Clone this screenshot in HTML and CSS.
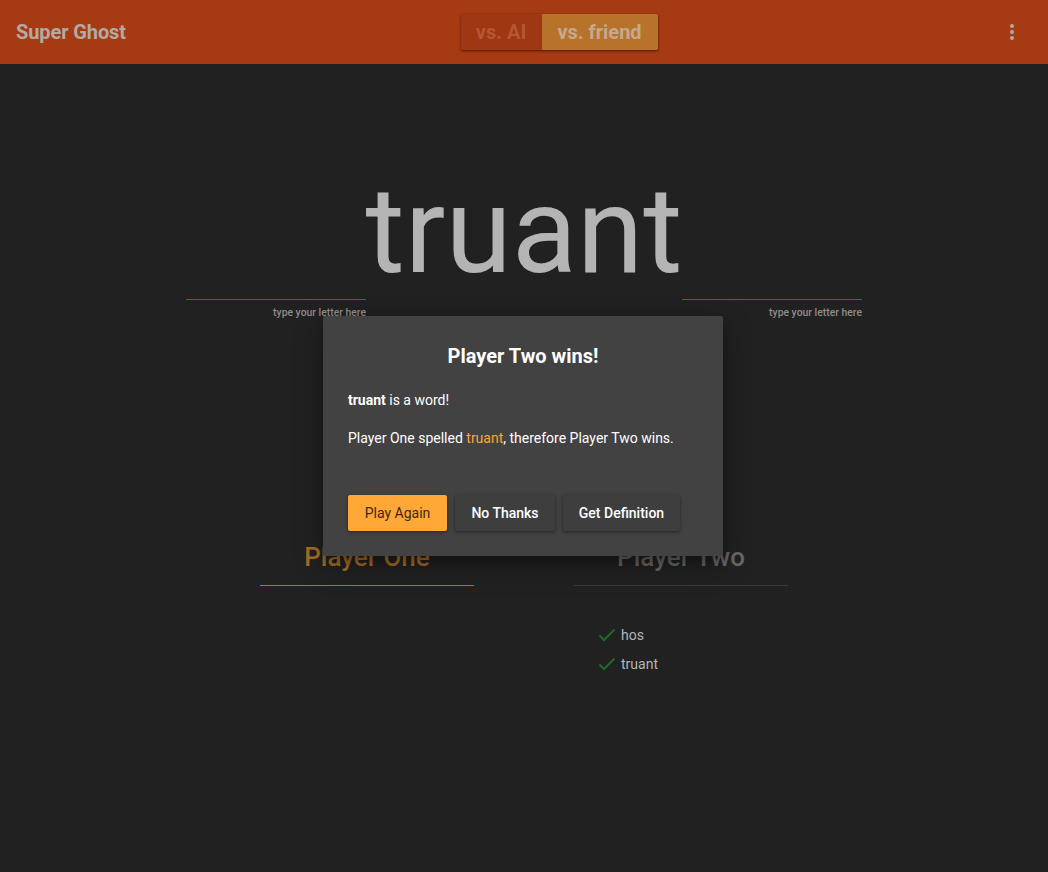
FILE: index.html
```html
<!DOCTYPE html>
<html lang="en">
<head>
<meta charset="utf-8">
<title>Super Ghost</title>
<link rel="stylesheet" href="styles.css">
</head>
<body>
<header class="appbar">
  <div class="brand">Super Ghost</div>
  <div class="toggle">
    <span class="toggle-btn">vs. AI</span>
    <span class="toggle-btn active">vs. friend</span>
  </div>
  <div class="menu">
    <svg width="6" height="18" viewBox="0 0 6 18"><circle cx="3" cy="3" r="2"/><circle cx="3" cy="9" r="2"/><circle cx="3" cy="15" r="2"/></svg>
  </div>
</header>

<main class="game">
  <div class="word">truant</div>
  <div class="inputs">
    <div class="field"><div class="line"></div><div class="hint">type your letter here</div></div>
    <div class="field"><div class="line"></div><div class="hint">type your letter here</div></div>
  </div>
  <div class="players">
    <section class="player one">
      <h2 class="pname">Player One</h2>
      <ul class="words"></ul>
    </section>
    <section class="player two">
      <h2 class="pname">Player Two</h2>
      <ul class="words">
        <li><svg class="check" width="18" height="14" viewBox="0 0 18 14"><path d="M1.5 7.5 L6 12 L16.5 1.5"/></svg>hos</li>
        <li><svg class="check" width="18" height="14" viewBox="0 0 18 14"><path d="M1.5 7.5 L6 12 L16.5 1.5"/></svg>truant</li>
      </ul>
    </section>
  </div>
</main>

<div class="dialog">
  <h1 class="dtitle">Player Two wins!</h1>
  <p class="dtext"><b>truant</b> is a word!</p>
  <p class="dtext">Player One spelled <span class="hl">truant</span>, therefore Player Two wins.</p>
  <div class="actions">
    <button class="btn primary">Play Again</button>
    <button class="btn">No Thanks</button>
    <button class="btn">Get Definition</button>
  </div>
</div>
</body>
</html>
```

FILE: styles.css
```css
* { box-sizing: border-box; }
html, body { margin: 0; padding: 0; }
body {
  background: #212121;
  font-family: Roboto, "Liberation Sans", Arial, sans-serif;
  width: 1048px;
  height: 872px;
  overflow: hidden;
}
.appbar {
  height: 64px;
  background: #a63a13;
  display: grid;
  grid-template-columns: 1fr auto 1fr;
  align-items: center;
  padding: 0 16px;
}
.brand {
  color: #b3aaa4;
  font-size: 20px;
  font-weight: 700;
  letter-spacing: -0.1px;
}
.toggle {
  display: flex;
  height: 36px;
  border-radius: 2px;
  overflow: hidden;
  box-shadow: 0 1px 3px rgba(0,0,0,0.35), 0 1px 2px rgba(0,0,0,0.25);
  margin-left: 70px;
}
.toggle-btn {
  display: flex;
  align-items: center;
  justify-content: center;
  font-size: 20px;
  font-weight: 700;
  color: #b65637;
  background: #9f3712;
  width: 81px;
}
.toggle-btn.active {
  background: #b8732a;
  color: #c6a88c;
  width: 116px;
}
.menu {
  justify-self: end;
  display: flex;
  align-items: center;
  padding-right: 17px;
}
.menu svg { fill: #b0a8a3; display: block; }

.game {
  display: flex;
  flex-direction: column;
  align-items: center;
}
.word {
  margin-top: 107px;
  font-size: 120px;
  line-height: 120px;
  color: #b4b4b4;
}
.inputs {
  display: flex;
  gap: 316px;
  margin-top: 8px;
}
.field { width: 180px; }
.line { height: 1px; background: #d0281e; }
.hint {
  text-align: right;
  font-size: 10.4px;
  font-weight: 500;
  color: #8d8d8d;
  margin-top: 6px;
  line-height: 14px;
}
.players {
  display: flex;
  gap: 100px;
  margin-top: 221px;
}
.player { width: 214px; }
.pname {
  margin: 0;
  font-size: 26px;
  font-weight: 500;
  text-align: center;
  line-height: 32px;
  padding-bottom: 12px;
  border-bottom: 1px solid #3a3a3a;
  color: #686868;
}
.player.one .pname { color: #a86d25; border-bottom-color: #b56f1f; }
.words {
  list-style: none;
  margin: 0;
  padding: 34px 0 0 24px;
}
.words li {
  display: flex;
  align-items: center;
  gap: 5px;
  height: 29px;
  font-size: 14px;
  color: #b5b5b5;
}
.check {
  fill: none;
  stroke: #1e6a23;
  stroke-width: 2;
}

.dialog {
  position: absolute;
  left: 323px;
  top: 316px;
  width: 400px;
  height: 240px;
  background: #424242;
  border-radius: 2px;
  box-shadow: 0 10px 30px rgba(0,0,0,0.3), 0 6px 10px rgba(0,0,0,0.22);
  padding: 24px 25px 25px;
  display: flex;
  flex-direction: column;
}
.dtitle {
  margin: 0;
  text-align: center;
  font-size: 20px;
  font-weight: 700;
  color: #ffffff;
  line-height: 32px;
}
.dtext {
  margin: 0;
  font-size: 14px;
  color: #ffffff;
  line-height: 20px;
}
.dtitle + .dtext { margin-top: 18px; }
.dtext + .dtext { margin-top: 18px; }
.dtext b { font-weight: 700; }
.hl { color: #ffa737; }
.actions {
  margin-top: auto;
  display: flex;
  gap: 8px;
}
.btn {
  height: 36px;
  border: none;
  border-radius: 2px;
  background: #3e3e3e;
  color: #ffffff;
  font-family: inherit;
  font-size: 14px;
  font-weight: 500;
  padding: 0;
  white-space: nowrap;
  box-shadow: 0 1px 4px rgba(0,0,0,0.3), 0 1px 2px rgba(0,0,0,0.2);
}
.btn.primary {
  background: #ffa737;
  color: #3b2a12;
  font-weight: 400;
  width: 99px;
}
.btn:nth-child(2) { width: 100px; }
.btn:nth-child(3) { width: 117px; }
```
